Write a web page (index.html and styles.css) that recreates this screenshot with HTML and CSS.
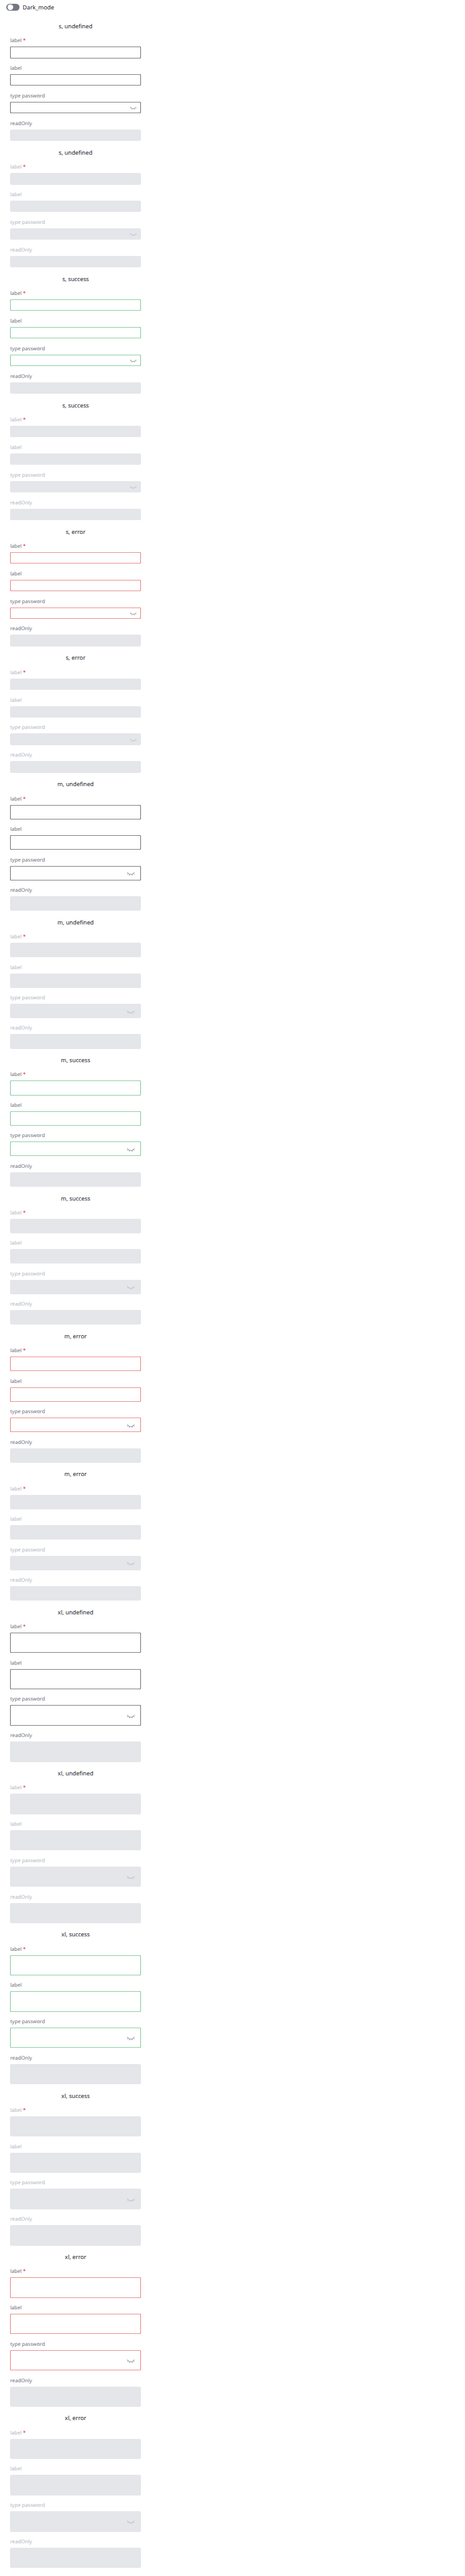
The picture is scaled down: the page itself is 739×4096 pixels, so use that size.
FILE: index.html
```
<!DOCTYPE html>
<html lang="en">
<head>
<meta charset="utf-8">
<title>Inputs</title>
<link rel="stylesheet" href="styles.css">
</head>
<body>
<header class="toolbar">
  <span class="switch"><span class="knob"></span></span>
  <span class="switch-text">Dark_mode</span>
</header>
<main class="groups" id="groups"></main>
<script src="script.js"></script>
</body>
</html>
```

FILE: styles.css
```
:root {
  --u: calc(739px / 1280);
}

body {
  margin: 0;
  background: #fff;
  color: #23262d;
  font-family: "Noto Sans", sans-serif;
  font-size: calc(16 * var(--u));
  line-height: calc(24 * var(--u));
  text-rendering: geometricPrecision;
}

.toolbar {
  display: flex;
  align-items: center;
  gap: calc(8.5 * var(--u));
  height: calc(24 * var(--u));
  padding: calc(8 * var(--u)) calc(18 * var(--u)) calc(28.4 * var(--u));
}

.switch {
  box-sizing: border-box;
  width: calc(36 * var(--u));
  height: calc(20 * var(--u));
  padding: calc(2 * var(--u));
  border-radius: calc(10 * var(--u));
  background: #737780;
}

.knob {
  display: block;
  width: calc(16 * var(--u));
  height: calc(16 * var(--u));
  border-radius: 50%;
  background: #fff;
}

.groups {
  width: calc(360 * var(--u));
  padding: 0 calc(28 * var(--u));
}

/* Fixed heights keep the rhythm even at fractional sizes. */
.group {
  display: flex;
  flex-direction: column;
  justify-content: space-between;
  box-sizing: border-box;
  height: calc(380.02 * var(--u));
  padding-bottom: calc(20 * var(--u));
}

.group.size-s {
  height: calc(348.02 * var(--u));
}

.group.size-xl {
  height: calc(444.02 * var(--u));
}

.title {
  text-align: center;
}

.field {
  display: flex;
  flex-direction: column;
  gap: calc(6 * var(--u));
}

.label {
  font-size: calc(14 * var(--u));
  line-height: calc(20 * var(--u));
  color: #6e727b;
}

.required {
  color: #da1e28;
}

.box {
  display: flex;
  align-items: center;
  justify-content: flex-end;
  box-sizing: border-box;
  height: calc(40 * var(--u));
  padding-right: calc(16 * var(--u));
  border-radius: calc(4 * var(--u));
  box-shadow: inset 0 0 0 var(--u) #000;
}

.eye {
  width: calc(24 * var(--u));
  height: calc(24 * var(--u));
  fill: none;
  stroke: #6e727b;
  stroke-width: 1.4;
}

.size-s .box {
  height: calc(32 * var(--u));
  padding-right: calc(12 * var(--u));
}

.size-s .eye {
  width: calc(20 * var(--u));
  height: calc(20 * var(--u));
}

.size-xl .box {
  height: calc(56 * var(--u));
}

.success .box {
  box-shadow: inset 0 0 0 var(--u) #1a9e4b;
}

.error .box {
  box-shadow: inset 0 0 0 var(--u) #da1e1e;
}

.disabled .box,
.group .readonly {
  background: #e5e6ea;
  box-shadow: none;
}

.disabled .label {
  color: #b2b6bf;
}

.disabled .required {
  color: #da1e28;
}

.disabled .eye {
  stroke: #b2b6bf;
}
```

FILE: script.js
```
const eye = `<svg class="eye" viewBox="0 0 24 24">
  <path d="M2 10C4.6 14.2 8 16.2 12 16.2S19.400 14.200 22 10M2 15.600L5.400 13.400M22 15.600L18.600 13.400M9 16L7.700 19.300M15 16L16.300 19.300"/>
</svg>`;

const field = (label, kind = "", icon = "") => `
  <div class="field">
    <div class="label">${label}</div>
    <div class="box ${kind}">${icon}</div>
  </div>`;

const group = (size, status, disabled) => `
  <section class="group size-${size} ${status} ${disabled ? "disabled" : ""}">
    <div class="title">${size}, ${status}</div>
    ${field('label <span class="required">*</span>')}
    ${field("label")}
    ${field("type password", "", eye)}
    ${field("readOnly", "readonly")}
  </section>`;

let html = "";
for (const size of ["s", "m", "xl"]) {
  for (const status of ["undefined", "success", "error"]) {
    html += group(size, status, false) + group(size, status, true);
  }
}
document.getElementById("groups").innerHTML = html;
```
